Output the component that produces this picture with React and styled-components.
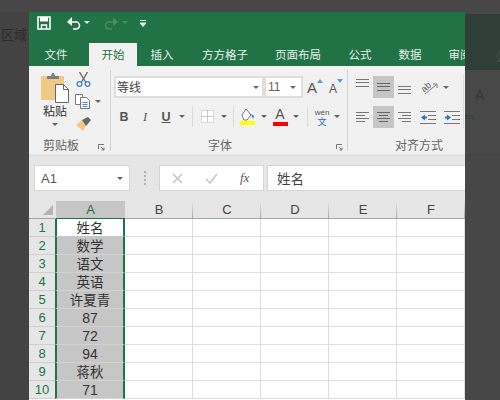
import React from 'react'
import styled, { createGlobalStyle } from 'styled-components'

const FONT = `"Noto Sans CJK SC", "Liberation Sans", sans-serif`
const LATIN = `"Liberation Sans", sans-serif`
const GREEN = '#217346'

const Global = createGlobalStyle`
  html, body { margin: 0; padding: 0; background: #444; }
  * { box-sizing: border-box; }
  svg { display: block; flex: none; }
`

const Page = styled.div`
  width: 500px;
  height: 400px;
  overflow: hidden;
  background: #434343;
  font-family: ${FONT};
  display: flex;
  flex-direction: column;
`
const TopStrip = styled.div`
  height: 12px;
  flex: none;
  background: #474747;
`
const Desk = styled.div`
  display: flex;
  height: 388px;
`
const LeftGutter = styled.div`
  width: 29px;
  flex: none;
  padding: 14px 2px 0 0;
  overflow: hidden;
  color: #2b2b2b;
  font-size: 13px;
  line-height: 16px;
  white-space: nowrap;
  text-align: right;
`
const Excel = styled.div`
  width: 436px;
  flex: none;
  overflow: hidden;
  display: flex;
  flex-direction: column;
  background: #e6e6e6;
`
const RightDim = styled.div`
  flex: 1;
  display: flex;
  flex-direction: column;
  overflow: hidden;
  padding-top: 2px;
  background: #474747;
`
const DimGreen = styled.div`
  height: 56px;
  flex: none;
  background: #2f3e36;
  color: #43544b;
  font-size: 12px;
  line-height: 18px;
  padding: 34px 0 0 30px;
  white-space: nowrap;
`
const DimRibbon = styled.div`
  height: 85px;
  flex: none;
  background: #484848;
  border-bottom: 1px solid #444;
  padding-top: 18px;
  display: flex;
  flex-direction: column;
`
const DimSheet = styled.div`
  flex: 1;
  background: #474747;
`
const DimText = styled.div`
  margin: ${p => p.$m || 0};
  color: ${p => p.$c || '#363636'};
  font-family: ${LATIN};
  font-size: ${p => p.$size}px;
  line-height: ${p => p.$lh || 14}px;
`

const TitleBar = styled.div`
  height: 22px;
  flex: none;
  background: ${GREEN};
  display: flex;
  align-items: center;
  padding-left: 8px;
`
const QuickSlot = styled.div`
  display: flex;
  align-items: center;
  gap: 3px;
  margin-right: ${p => p.$gap}px;
`
const TabBar = styled.div`
  height: 32px;
  flex: none;
  padding-top: 9px;
  background: ${GREEN};
  display: flex;
  align-items: stretch;
`
const Tab = styled.div`
  flex: none;
  width: ${p => p.$w}px;
  margin-right: ${p => p.$mr || 0}px;
  text-align: center;
  font-size: 11.5px;
  line-height: 22px;
  white-space: nowrap;
  color: ${p => (p.$active ? GREEN : '#e6f0ea')};
  background: ${p => (p.$active ? '#f1f1f1' : 'transparent')};
`
const Ribbon = styled.div`
  height: 91px;
  flex: none;
  background: #f1f1f1;
  border-bottom: 3px solid #e1e1e1;
  display: flex;
`
const Group = styled.div`
  flex: none;
  width: ${p => p.$w}px;
  height: 88px;
  display: flex;
  flex-direction: column;
`
const GroupBody = styled.div`
  height: 72px;
  flex: none;
  display: flex;
  flex-direction: ${p => p.$dir || 'column'};
`
const GroupFooter = styled.div`
  height: 16px;
  flex: none;
  display: flex;
  justify-content: space-between;
  padding: 0 ${p => p.$pr || 0}px 0 ${p => p.$pl}px;
`
const GroupLabel = styled.div`
  white-space: nowrap;
  font-size: 12px;
  line-height: 14px;
  color: #666;
`
const Launcher = styled.svg`
  margin-top: 6px;
`
const GroupDivider = styled.div`
  flex: none;
  width: 1px;
  height: ${p => p.$h || 81}px;
  margin-top: ${p => p.$top || 4}px;
  background: ${p => p.$c || '#d2d2d2'};
`

const PasteCol = styled.div`
  width: 28px;
  margin: 7px 0 0 12px;
  display: flex;
  flex-direction: column;
  align-items: center;
`
const PasteLabel = styled.div`
  margin: 1px 0 5px;
  font-size: 12px;
  line-height: 14px;
  color: #333;
  white-space: nowrap;
`
const ClipTools = styled.div`
  margin: 6px 0 0 6px;
  display: flex;
  flex-direction: column;
  gap: 7px;
`
const ClipTool = styled.div`
  height: 15px;
  display: flex;
  align-items: center;
  gap: 4px;
  padding-left: ${p => p.$pl || 0}px;
`

const ToolRow = styled.div`
  height: ${p => p.$h}px;
  flex: none;
  margin: ${p => p.$m};
  display: flex;
  align-items: ${p => p.$align || 'center'};
`
const FontBox = styled.div`
  width: ${p => p.$w}px;
  height: 22px;
  flex: none;
  background: #fff;
  border: 2px solid #dedede;
  font-family: ${p => (p.$latin ? LATIN : FONT)};
  font-size: 12px;
  line-height: 18px;
  padding-left: ${p => p.$pl || 1}px;
  color: ${p => (p.$latin ? '#6b6150' : '#444')};
  display: flex;
  justify-content: space-between;
  align-items: center;
`
const Caret = styled.span`
  display: inline-block;
  flex: none;
  width: 0;
  height: 0;
  border-left: 3px solid transparent;
  border-right: 3px solid transparent;
  border-top: 3px solid ${p => p.$c || '#666'};
  margin-right: ${p => p.$mr || 0}px;
`
const SizeButton = styled.div`
  display: flex;
  align-items: flex-start;
  margin-left: ${p => p.$ml}px;
  padding-top: 3px;
`
const SizeLetter = styled.span`
  font-family: ${LATIN};
  font-size: ${p => p.$size}px;
  line-height: 16px;
  margin-top: ${p => p.$top}px;
  color: #555;
`
const ToolCell = styled.div`
  width: ${p => p.$w}px;
  height: 21px;
  flex: none;
  display: flex;
  flex-direction: ${p => (p.$stack ? 'column' : 'row')};
  align-items: center;
  justify-content: center;
`
const FontGlyph = styled.span`
  font-family: ${p => (p.$italic ? '"Liberation Serif", serif' : LATIN)};
  font-size: 12.5px;
  line-height: 14px;
  color: #555;
  font-weight: ${p => (p.$italic ? 400 : 700)};
  font-style: ${p => (p.$italic ? 'italic' : 'normal')};
  text-decoration: ${p => (p.$under ? 'underline' : 'none')};
`
const ColorLetter = styled.span`
  font-family: ${LATIN};
  font-size: 14px;
  line-height: 15px;
  color: #555;
`
const ToolSep = styled.div`
  width: 1px;
  height: 21px;
  flex: none;
  margin: ${p => p.$m};
  background: #dadada;
`
const ColorBar = styled.div`
  width: 15px;
  height: 4px;
  flex: none;
  background: ${p => p.$c};
`
const Pinyin = styled.span`
  font-family: ${LATIN};
  font-size: 8px;
  line-height: 9px;
  color: #555;
`
const PinyinZh = styled.span`
  font-size: 9px;
  line-height: 9px;
  color: #2b6cb0;
`

const AlignGrid = styled.div`
  margin: 10px 0 0 4px;
  display: grid;
  grid-template-columns: 21px 21px 21px 26px 21px;
  grid-auto-rows: 22px;
  row-gap: 8px;
`
const AlignCell = styled.div`
  display: flex;
  align-items: ${p => p.$v || 'center'};
  justify-content: center;
  padding: 3px 0;
  background: ${p => (p.$on ? '#c6c6c6' : 'transparent')};
`
const OrientCell = styled.div`
  grid-column: span 2;
  display: flex;
  align-items: center;
  gap: 5px;
  padding-left: 5px;
`

const Formula = styled.div`
  height: 44px;
  flex: none;
  background: #e6e6e6;
  display: flex;
  padding: 8px 0 0 5px;
`
const NameBox = styled.div`
  width: 96px;
  height: 26px;
  flex: none;
  background: #fff;
  border: 1px solid #d4d4d4;
  display: flex;
  align-items: center;
  justify-content: space-between;
  padding: 0 6px;
  font-family: ${LATIN};
  font-size: 13px;
  color: #555;
`
const Dots = styled.div`
  width: 29px;
  height: 26px;
  flex: none;
  display: flex;
  flex-direction: column;
  align-items: center;
  justify-content: center;
  gap: 2px;
  & > i { display: block; width: 2px; height: 2px; background: #b0b0b0; }
`
const FxBox = styled.div`
  width: 105px;
  height: 26px;
  flex: none;
  background: #fff;
  border: 1px solid #d4d4d4;
  display: flex;
  align-items: center;
  gap: 22px;
  padding-left: 12px;
`
const FxText = styled.span`
  font-family: "Liberation Serif", serif;
  font-style: italic;
  font-size: 13px;
  line-height: 14px;
  color: #555;
`
const FormulaInput = styled.div`
  flex: 1;
  height: 26px;
  margin-left: 3px;
  background: #fff;
  border: 1px solid #d4d4d4;
  border-right: none;
  padding-left: 9px;
  font-size: 13.5px;
  line-height: 24px;
  color: #444;
`

const Sheet = styled.div`
  flex: 1;
  background: #fff;
  overflow: hidden;
`
const Row = styled.div`
  display: flex;
  height: 18px;
`
const Corner = styled.div`
  width: 27px;
  flex: none;
  background: #e6e6e6;
  border-bottom: 1px solid #a4a4a4;
  display: flex;
  align-items: flex-end;
  justify-content: flex-end;
  padding: 0 3px 3px 0;
`
const ColHead = styled.div`
  flex: none;
  width: ${p => p.$w}px;
  background: ${p => (p.$sel ? '#c6c6c6' : `linear-gradient(#e6e6e6, #a8a8a8) right / 1px 100% no-repeat, #e6e6e6`)};
  color: ${p => (p.$sel ? GREEN : '#444')};
  border-bottom: 1px solid ${p => (p.$sel ? GREEN : '#a4a4a4')};
  font-family: ${LATIN};
  font-size: 13px;
  line-height: 18px;
  text-align: center;
`
const RowHead = styled.div`
  width: 26px;
  flex: none;
  background: #e6e6e6;
  color: ${GREEN};
  border-bottom: 1px solid #cfcfcf;
  font-family: ${LATIN};
  font-size: 13px;
  line-height: 18px;
  text-align: center;
`
const SelCell = styled.div`
  flex: none;
  width: 70px;
  background: ${p => (p.$first ? '#fff' : '#c6c6c6')};
  border-left: 2px solid ${GREEN};
  border-right: 2px solid ${GREEN};
  border-bottom: 1px solid ${p => (p.$first ? '#c6c6c6' : '#d2d2d2')};
  font-family: ${p => (p.$num ? LATIN : FONT)};
  font-size: ${p => (p.$num ? 14 : 13.5)}px;
  line-height: ${p => (p.$num ? 19 : 17)}px;
  text-align: center;
  color: #333;
  white-space: nowrap;
`
const Cell = styled.div`
  flex: none;
  width: 68px;
  border-right: 1px solid #dedede;
  border-bottom: 1px solid #dedede;
`

const Tabs = [
  ['文件', 54, 6],
  ['开始', 48, 0],
  ['插入', 50, 0],
  ['方方格子', 76, 0],
  ['页面布局', 70, 0],
  ['公式', 54, 0],
  ['数据', 46, 0],
  ['审阅', 54, 0],
]
const HeadCols = ['B', 'C', 'D', 'E', 'F']
const Values = ['姓名', '数学', '语文', '英语', '许夏青', '87', '72', '94', '蒋秋', '71']

function Lines({ rows, h = 13, color = '#777' }) {
  return (
    <svg width="13" height={h} viewBox={`0 0 13 ${h}`}>
      {rows.map(([x1, x2, y], i) => (
        <line key={i} x1={x1} x2={x2} y1={y} y2={y} stroke={color} strokeWidth="1" />
      ))}
    </svg>
  )
}

const THREE = [[0, 13, 0.5], [0, 13, 3.5], [0, 13, 7.5]]
const ALIGN_L = [[0, 13, 1.5], [0, 9, 4.5], [0, 13, 7.5], [0, 9, 10.5]]
const ALIGN_C = [[0, 13, 1.5], [2, 11, 4.5], [0, 13, 7.5], [2, 11, 10.5]]
const ALIGN_R = [[0, 13, 1.5], [4, 13, 4.5], [0, 13, 7.5], [4, 13, 10.5]]

function CornerMark() {
  return (
    <Launcher width="7" height="7" viewBox="0 0 7 7">
      <path d="M.5 5V.5H6M3 3l3 3M6 3.500V6H3.500" stroke="#777" fill="none" />
    </Launcher>
  )
}

function ClipboardGroup() {
  return (
    <Group $w={81}>
      <GroupBody $dir="row">
        <PasteCol>
          <svg width="28" height="30" viewBox="0 0 28 30">
            <path d="M0 3h23v24H0z" fill="#f0c987" />
            <path d="M6 6V3h4l1-3h2l1 3h4v3z" fill="#7f7f7f" />
            <path d="M14.500 11.500h8l5 5v13h-13z" fill="#fff" stroke="#666" />
            <path d="M22.500 11.500v5h5" fill="none" stroke="#666" />
          </svg>
          <PasteLabel>粘贴</PasteLabel>
          <Caret />
        </PasteCol>
        <ClipTools>
          <ClipTool $pl={1}>
            <svg width="15" height="15" viewBox="0 0 15 15">
              <path d="M3.500 0l6 10M11.500 0l-6 10" stroke="#666" strokeWidth="1.300" fill="none" />
              <circle cx="3.500" cy="12" r="2.400" fill="none" stroke="#3f7fbf" strokeWidth="1.300" />
              <circle cx="11.500" cy="12" r="2.400" fill="none" stroke="#3f7fbf" strokeWidth="1.300" />
            </svg>
          </ClipTool>
          <ClipTool>
            <svg width="16" height="15" viewBox="0 0 16 15">
              <path d="M.5.5h7v10h-7z" fill="#fff" stroke="#777" />
              <path d="M5.500 3.500h6l3 3v8h-9z" fill="#fff" stroke="#777" />
              <path d="M7.500 8.500h5M7.500 10.500h5M7.500 12.500h5" stroke="#4a86c5" />
            </svg>
            <Caret />
          </ClipTool>
          <ClipTool $pl={1}>
            <svg width="16" height="14" viewBox="0 0 16 14">
              <path d="M0 8l6-5 4 6-3 5z" fill="#f0c987" />
              <path d="M6 3l6-3 3 3-5 6z" fill="#666" />
            </svg>
          </ClipTool>
        </ClipTools>
      </GroupBody>
      <GroupFooter $pl={14} $pr={5}>
        <GroupLabel>剪贴板</GroupLabel>
        <CornerMark />
      </GroupFooter>
    </Group>
  )
}

function FontGroup() {
  return (
    <Group $w={236}>
      <GroupBody>
        <ToolRow $h={22} $m="10px 0 0 3px" $align="flex-start">
          <FontBox $w={150}>等线<Caret $mr={3} /></FontBox>
          <FontBox $w={39} $latin $pl={2}>11<Caret $mr={5} /></FontBox>
          <SizeButton $ml={4}>
            <SizeLetter $size={15} $top={1}>A</SizeLetter>
            <svg width="6" height="4" viewBox="0 0 6 4"><path d="M0 4l3-4 3 4z" fill="#5b9bd5" /></svg>
          </SizeButton>
          <SizeButton $ml={6}>
            <SizeLetter $size={12} $top={2}>A</SizeLetter>
            <svg width="6" height="4" viewBox="0 0 6 4"><path d="M0 0l3 4 3-4z" fill="#5b9bd5" /></svg>
          </SizeButton>
        </ToolRow>
        <ToolRow $h={21} $m="8px 0 0 3px">
          <ToolCell $w={20}><FontGlyph>B</FontGlyph></ToolCell>
          <ToolCell $w={22}><FontGlyph $italic>I</FontGlyph></ToolCell>
          <ToolCell $w={20}><FontGlyph $under>U</FontGlyph></ToolCell>
          <ToolCell $w={12}><Caret /></ToolCell>
          <ToolSep $m="0 4px" />
          <ToolCell $w={21}>
            <svg width="13" height="13" viewBox="0 0 13 13">
              <path d="M.5.500h12v12H.5z" fill="#fff" stroke="#bbb" strokeDasharray="1 1" />
              <path d="M6.500.500v12M.5 6.500h12" stroke="#999" strokeDasharray="1 1" />
            </svg>
          </ToolCell>
          <ToolCell $w={12}><Caret /></ToolCell>
          <ToolSep $m="0 3px" />
          <ToolCell $w={21} $stack>
            <svg width="15" height="13" viewBox="0 0 15 13">
              <path d="M2 7l4-6 5 6-4 5H4z" fill="#fff" stroke="#777" />
              <path d="M11 6l3 2-1 3z" fill="#2e75b6" />
            </svg>
            <ColorBar $c="#ffff00" />
          </ToolCell>
          <ToolCell $w={12}><Caret /></ToolCell>
          <ToolCell $w={20} $stack>
            <ColorLetter>A</ColorLetter>
            <ColorBar $c="#ff0000" />
          </ToolCell>
          <ToolCell $w={12}><Caret /></ToolCell>
          <ToolSep $m="0 2px 0 5px" />
          <ToolCell $w={24} $stack>
            <Pinyin>wén</Pinyin>
            <PinyinZh>文</PinyinZh>
          </ToolCell>
          <ToolCell $w={6}><Caret /></ToolCell>
        </ToolRow>
      </GroupBody>
      <GroupFooter $pl={97} $pr={4}>
        <GroupLabel>字体</GroupLabel>
        <CornerMark />
      </GroupFooter>
    </Group>
  )
}

function AlignGroup() {
  return (
    <Group $w={115}>
      <GroupBody>
        <AlignGrid>
          <AlignCell $v="flex-start"><Lines rows={THREE} h={9} /></AlignCell>
          <AlignCell $on><Lines rows={THREE} h={9} color="#666" /></AlignCell>
          <AlignCell $v="flex-end"><Lines rows={THREE} h={9} /></AlignCell>
          <OrientCell>
            <svg width="18" height="16" viewBox="0 0 18 16">
              <text x="1" y="11" transform="rotate(-40 6 8)" fontFamily={LATIN} fontSize="9" fill="#555">ab</text>
              <path d="M5 15L16 6M13 5h4v4" stroke="#777" fill="none" />
            </svg>
            <Caret />
          </OrientCell>
          <AlignCell><Lines rows={ALIGN_L} /></AlignCell>
          <AlignCell $on><Lines rows={ALIGN_C} color="#666" /></AlignCell>
          <AlignCell><Lines rows={ALIGN_R} /></AlignCell>
          <AlignCell>
            <svg width="16" height="13" viewBox="0 0 16 13">
              <path d="M0 .5h16M8 4.500h8M8 8.500h8M0 12.500h16" stroke="#777" />
              <path d="M1 6.500l4-3v2h2v2H5v2z" fill="#2e75b6" />
            </svg>
          </AlignCell>
          <AlignCell>
            <svg width="16" height="13" viewBox="0 0 16 13">
              <path d="M0 .5h16M8 4.500h8M8 8.500h8M0 12.500h16" stroke="#777" />
              <path d="M7 6.500l-4-3v2H1v2h2v2z" fill="#2e75b6" />
            </svg>
          </AlignCell>
        </AlignGrid>
      </GroupBody>
      <GroupFooter $pl={47}>
        <GroupLabel>对齐方式</GroupLabel>
      </GroupFooter>
    </Group>
  )
}

export default function App() {
  return (
    <Page>
      <Global />
      <TopStrip />
      <Desk>
        <LeftGutter>区域</LeftGutter>
        <Excel>
          <TitleBar>
            <QuickSlot $gap={15}>
              <svg width="14" height="14" viewBox="0 0 14 14">
                <path d="M1 1h12v12H1z" fill="none" stroke="#fff" strokeWidth="1.600" />
                <path d="M3 1h8v4.500H3z" fill="#fff" />
                <path d="M4.500 13V9h5v4" fill="none" stroke="#fff" strokeWidth="1.400" />
              </svg>
            </QuickSlot>
            <QuickSlot $gap={14}>
              <svg width="15" height="13" viewBox="0 0 15 13">
                <path d="M4 5h6a3.500 3.500 0 0 1 0 7H7" fill="none" stroke="#fff" strokeWidth="1.600" />
                <path d="M6 0L1 5l5 4z" fill="#fff" />
              </svg>
              <svg width="6" height="4" viewBox="0 0 6 4"><path d="M0 0h6L3 3z" fill="#e0eae4" /></svg>
            </QuickSlot>
            <QuickSlot $gap={12}>
              <svg width="15" height="13" viewBox="0 0 15 13">
                <path d="M11 5H5a3.500 3.500 0 0 0 0 7h3" fill="none" stroke="#4a8a66" strokeWidth="1.600" />
                <path d="M9 0l5 5-5 4z" fill="#4a8a66" />
              </svg>
              <svg width="6" height="4" viewBox="0 0 6 4"><path d="M0 0h6L3 3z" fill="#4a8a66" /></svg>
            </QuickSlot>
            <svg width="6" height="7" viewBox="0 0 6 7">
              <path d="M0 .5h6M0 3h6L3 6.500z" stroke="#e0eae4" strokeWidth="1" fill="#e0eae4" />
            </svg>
          </TitleBar>
          <TabBar>
            {Tabs.map(([name, w, mr], i) => (
              <Tab key={name} $w={w} $mr={mr} $active={i === 1}>{name}</Tab>
            ))}
          </TabBar>
          <Ribbon>
            <ClipboardGroup />
            <GroupDivider />
            <FontGroup />
            <GroupDivider />
            <AlignGroup />
            <GroupDivider $top={9} $h={53} $c="#dcdcdc" />
          </Ribbon>
          <Formula>
            <NameBox>A1<Caret /></NameBox>
            <Dots><i /><i /><i /><i /></Dots>
            <FxBox>
              <svg width="11" height="11" viewBox="0 0 11 11"><path d="M1 1l9 9M10 1l-9 9" stroke="#c4c4c4" strokeWidth="1.500" /></svg>
              <svg width="13" height="11" viewBox="0 0 13 11"><path d="M1 6l4 4 7-9" stroke="#c4c4c4" strokeWidth="1.500" fill="none" /></svg>
              <FxText>fx</FxText>
            </FxBox>
            <FormulaInput>姓名</FormulaInput>
          </Formula>
          <Sheet>
            <Row>
              <Corner>
                <svg width="10" height="10" viewBox="0 0 10 10"><path d="M10 0v10H0z" fill="#b4b4b4" /></svg>
              </Corner>
              <ColHead $w={69} $sel>A</ColHead>
              {HeadCols.map(c => <ColHead key={c} $w={68}>{c}</ColHead>)}
            </Row>
            {Values.map((v, i) => (
              <Row key={i}>
                <RowHead>{i + 1}</RowHead>
                <SelCell $first={i === 0} $num={/^\d+$/.test(v)}>{v}</SelCell>
                {HeadCols.map(c => <Cell key={c} />)}
              </Row>
            ))}
          </Sheet>
        </Excel>
        <RightDim>
          <DimGreen>公式</DimGreen>
          <DimRibbon>
            <DimText $m="0 0 0 10px" $size={14}>A</DimText>
            <DimText $m="10px 0 0" $size={8} $lh={9}>én</DimText>
            <DimText $size={9} $lh={10} $c="#3d4a55">文</DimText>
          </DimRibbon>
          <DimSheet />
        </RightDim>
      </Desk>
    </Page>
  )
}
